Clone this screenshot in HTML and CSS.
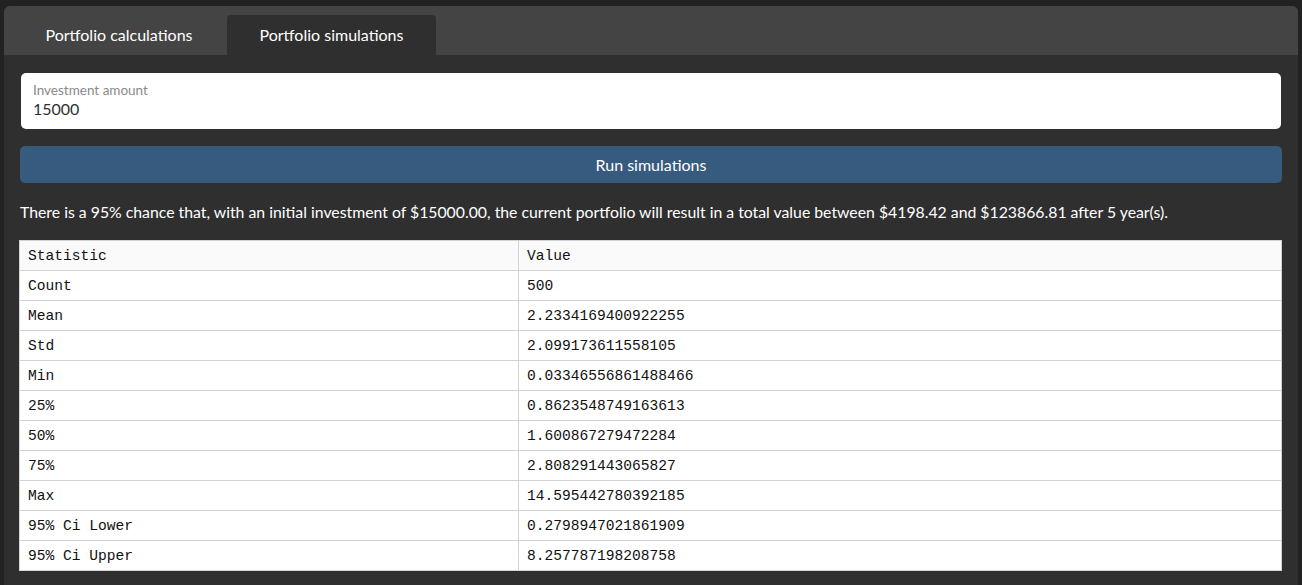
FILE: index.html
```html
<!DOCTYPE html>
<html>
<head>
<meta charset="utf-8">
<link rel="stylesheet" href="styles.css">
</head>
<body>
<div class="app">
  <div class="tabs">
    <div class="tab first">Portfolio calculations</div>
    <div class="tab active">Portfolio simulations</div>
  </div>
  <div class="content">
    <div class="field">
      <div class="field-label">Investment amount</div>
      <div class="field-value">15000</div>
    </div>
    <div class="btn">Run simulations</div>
    <p class="result">There is a 95% chance that, with an initial investment of $15000.00, the current portfolio will result in a total value between $4198.42 and $123866.81 after 5 year(s).</p>
    <table class="stats">
      <thead>
        <tr><th class="c1">Statistic</th><th>Value</th></tr>
      </thead>
      <tbody>
        <tr><td>Count</td><td>500</td></tr>
        <tr><td>Mean</td><td>2.2334169400922255</td></tr>
        <tr><td>Std</td><td>2.099173611558105</td></tr>
        <tr><td>Min</td><td>0.03346556861488466</td></tr>
        <tr><td>25%</td><td>0.8623548749163613</td></tr>
        <tr><td>50%</td><td>1.600867279472284</td></tr>
        <tr><td>75%</td><td>2.808291443065827</td></tr>
        <tr><td>Max</td><td>14.595442780392185</td></tr>
        <tr><td>95% Ci Lower</td><td>0.2798947021861909</td></tr>
        <tr><td>95% Ci Upper</td><td>8.257787198208758</td></tr>
      </tbody>
    </table>
  </div>
</div>
</body>
</html>
```
FILE: styles.css
```css
html, body {
  margin: 0;
  padding: 0;
  background: #222222;
  height: 100%;
  overflow: hidden;
}
body {
  font-family: Lato, "Liberation Sans", sans-serif;
}
.app {
  margin: 6px 4px 0 4px;
  background: #2f2f2f;
  border-radius: 6px 6px 0 0;
  min-height: 600px;
}
.tabs {
  display: flex;
  background: #444444;
  height: 49px;
  box-sizing: border-box;
  padding: 9px 0 0 7px;
  border-radius: 6px 6px 0 0;
}
.tab {
  width: 209px;
  height: 40px;
  box-sizing: border-box;
  padding-bottom: 2px;
  display: flex;
  align-items: center;
  justify-content: center;
  color: #ffffff;
  font-size: 16px;
  border-radius: 4px 4px 0 0;
}
.tab.first {
  width: 216px;
}
.tab.active {
  background: #2f2f2f;
}
.content {
  padding: 18px 16px 0 16px;
}
.field {
  margin: 0 1px;
  background: #ffffff;
  border-radius: 5px;
  height: 56px;
  box-sizing: border-box;
  padding: 9px 12px 0 12px;
}
.field-label {
  font-size: 13.5px;
  color: #8a8a8a;
  line-height: 16px;
}
.field-value {
  font-size: 16px;
  color: #303030;
  line-height: 20px;
  margin-top: 1px;
}
.btn {
  margin-top: 17px;
  height: 37px;
  background: #375a7f;
  border-radius: 5px;
  color: #ffffff;
  font-size: 16px;
  display: flex;
  align-items: center;
  justify-content: center;
}
.result {
  margin: 18px 0 0 0;
  color: #ffffff;
  font-size: 15.8px;
  line-height: 22px;
}
.stats {
  margin: 17px 0 0 -1px;
  width: calc(100% + 1px);
  border-collapse: collapse;
  font-family: "Liberation Mono", "DejaVu Sans Mono", monospace;
  font-size: 14.6px;
  color: #111111;
  background: #ffffff;
}
.stats th, .stats td {
  border: 1px solid #d3d3d3;
  height: 30px;
  padding: 1px 8px 0 8px;
  text-align: left;
  font-weight: normal;
  box-sizing: border-box;
}
.stats th {
  background: #fafafa;
}
.stats .c1 {
  width: 499px;
}
```
